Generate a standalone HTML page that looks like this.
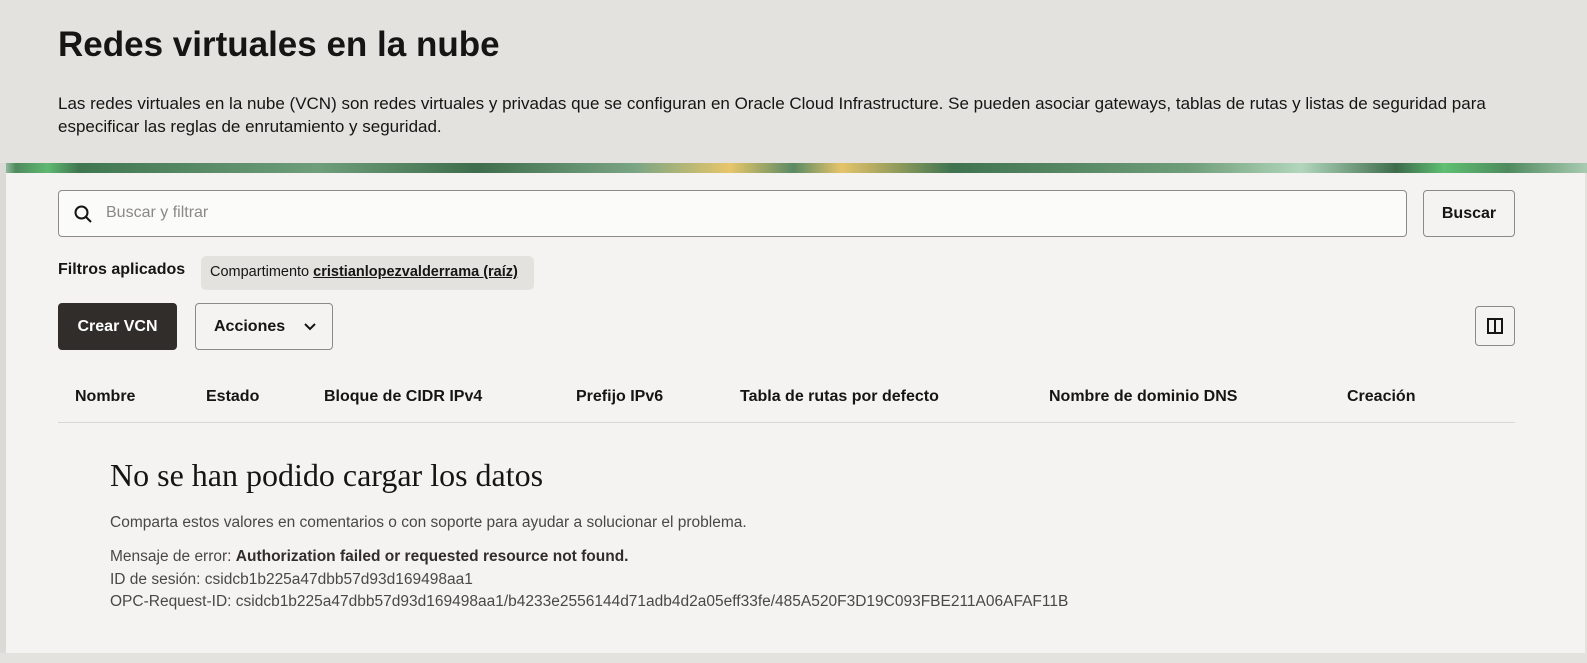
<!DOCTYPE html>
<html><head><meta charset="utf-8"><style>
*{box-sizing:border-box;margin:0;padding:0}
body{width:1587px;height:663px;overflow:hidden;background:#e4e2de;font-family:"Liberation Sans",sans-serif;color:#161513;position:relative}
.hdr{position:absolute;left:0;top:0;width:1587px;height:163px;background:#e4e2de}
h1{position:absolute;left:58px;top:25px;font-size:35px;font-weight:bold;letter-spacing:0}
.desc{position:absolute;left:58px;top:92px;font-size:17px;line-height:23px;width:1470px;color:#161513}
.band{position:absolute;left:0;top:163px;width:1587px;height:10px;background:linear-gradient(90deg,#b7d8c0 0,#4f8a5e 1%,#5fb871 3%,#3f7650 5%,#6e9e7a 20%,#3d6d4c 30%,#7aa585 40%,#e7c66a 46%,#5a8a64 50%,#e5c46a 53%,#3f7350 60%,#6f9e79 75%,#b2d6bc 82%,#3d6c4b 88%,#5fbf72 91%,#4f8a5e 95%,#a9cbb2 100%)}
.panel{position:absolute;left:6px;top:173px;width:1579px;height:480px;background:#f4f3f1}
.leftstrip{position:absolute;left:0;top:163px;width:6px;height:500px;background:#dcdad6}
.bottom{position:absolute;left:0;top:653px;width:1587px;height:10px;background:#e4e2de}
.search{position:absolute;left:58px;top:190px;width:1349px;height:47px;border:1px solid #8c8a87;border-radius:4px;background:#fbfbfa}
.search span{position:absolute;left:47px;top:13px;font-size:16px;color:#8b8985}
.btn{position:absolute;border:1px solid #8c8a87;border-radius:4px;font-weight:bold;font-size:16px;display:flex;align-items:center;justify-content:center}
.fl{position:absolute;left:58px;top:261px;font-size:16px;font-weight:bold}
.chip{position:absolute;left:201px;top:256px;width:333px;height:34px;background:#e4e2de;border-radius:5px;font-size:14.5px;padding:8px 0 0 9px;white-space:nowrap}
.chip u{font-weight:bold}
.th{position:absolute;top:388px;font-size:16px;font-weight:bold}
.line{position:absolute;left:58px;top:422px;width:1457px;height:1px;background:#d9d7d3}
.err{position:absolute;left:110px;top:457px;font-family:"Liberation Serif",serif;font-size:32px}
.sm{position:absolute;left:110px;font-size:15.5px;color:#4a4845;white-space:nowrap}
</style></head><body>
<div class="hdr"></div>
<h1>Redes virtuales en la nube</h1>
<div class="desc">Las redes virtuales en la nube (VCN) son redes virtuales y privadas que se configuran en Oracle Cloud Infrastructure. Se pueden asociar gateways, tablas de rutas y listas de seguridad para especificar las reglas de enrutamiento y seguridad.</div>
<div class="band"></div>
<div class="leftstrip"></div>
<div class="panel"></div>
<div class="bottom"></div>
<div class="search"><svg style="position:absolute;left:15px;top:14px" width="18" height="18" viewBox="0 0 18 18"><circle cx="7.5" cy="7.5" r="6" fill="none" stroke="#161513" stroke-width="2"/><path d="M12 12l5 5" stroke="#161513" stroke-width="2"/></svg><span>Buscar y filtrar</span></div>
<div class="btn" style="left:1423px;top:190px;width:92px;height:47px;background:#f4f3f1">Buscar</div>
<div class="fl">Filtros aplicados</div>
<div class="chip">Compartimento <u>cristianlopezvalderrama (raíz)</u></div>
<div class="btn" style="left:58px;top:303px;width:119px;height:47px;background:#312d2a;color:#fff;border-color:#312d2a">Crear VCN</div>
<div class="btn" style="left:195px;top:303px;width:138px;height:47px;background:#f4f3f1;justify-content:flex-start;padding-left:18px">Acciones<svg style="margin-left:18px" width="14" height="10" viewBox="0 0 14 10"><path d="M2 2l5 5 5-5" fill="none" stroke="#161513" stroke-width="2"/></svg></div>
<div class="btn" style="left:1475px;top:306px;width:40px;height:40px;background:#f4f3f1"><svg width="16" height="16" viewBox="0 0 16 16"><rect x="1" y="1" width="14" height="14" fill="none" stroke="#161513" stroke-width="2"/><path d="M8 1v14" stroke="#161513" stroke-width="2"/></svg></div>
<div class="th" style="left:75px">Nombre</div>
<div class="th" style="left:206px">Estado</div>
<div class="th" style="left:324px">Bloque de CIDR IPv4</div>
<div class="th" style="left:576px">Prefijo IPv6</div>
<div class="th" style="left:740px">Tabla de rutas por defecto</div>
<div class="th" style="left:1049px">Nombre de dominio DNS</div>
<div class="th" style="left:1347px">Creación</div>
<div class="line"></div>
<div class="err">No se han podido cargar los datos</div>
<div class="sm" style="top:514px">Comparta estos valores en comentarios o con soporte para ayudar a solucionar el problema.</div>
<div class="sm" style="top:548px">Mensaje de error: <b style="color:#312d2a">Authorization failed or requested resource not found.</b></div>
<div class="sm" style="top:571px">ID de sesión: csidcb1b225a47dbb57d93d169498aa1</div>
<div class="sm" style="top:593px">OPC-Request-ID: csidcb1b225a47dbb57d93d169498aa1/b4233e2556144d71adb4d2a05eff33fe/485A520F3D19C093FBE211A06AFAF11B</div>
</body></html>
